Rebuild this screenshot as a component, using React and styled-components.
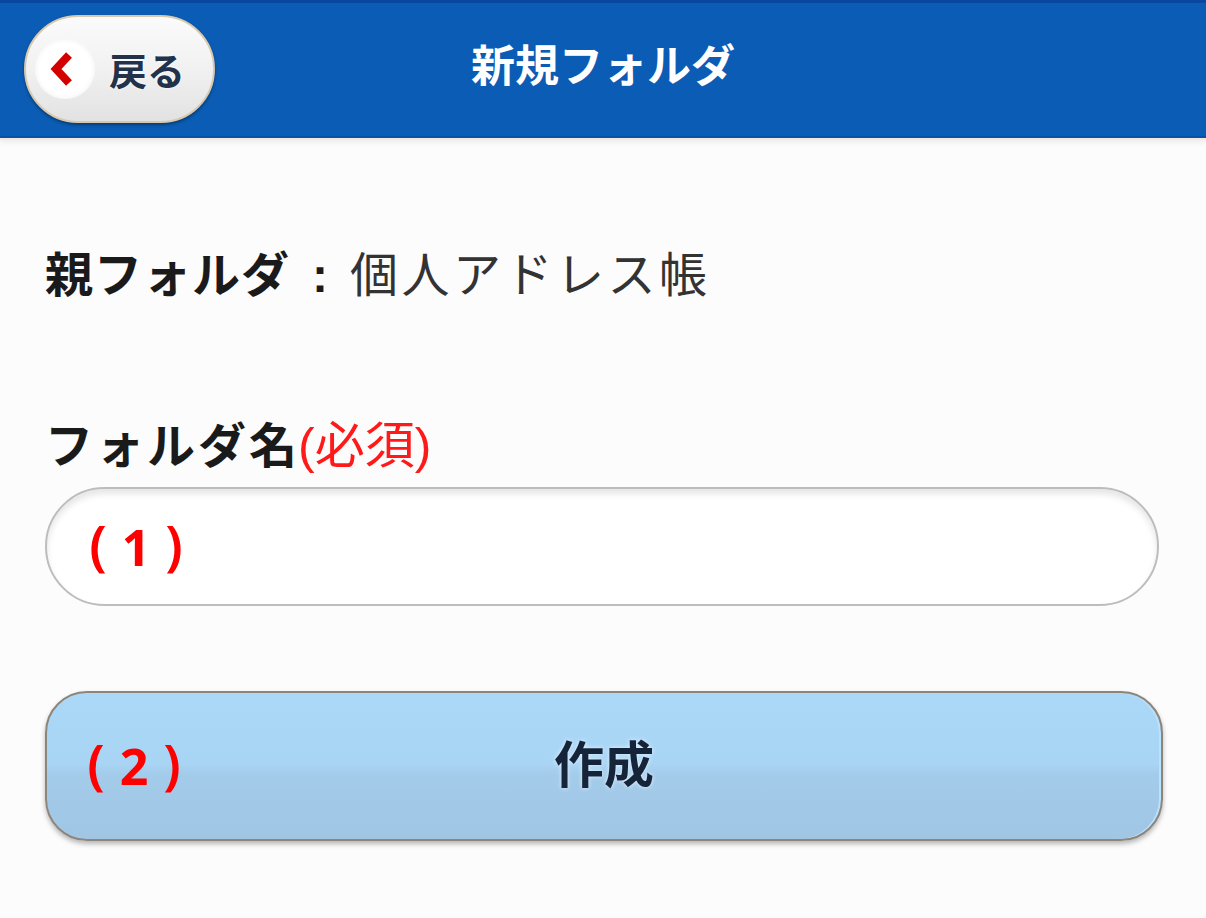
import React from "react";
import styled, { createGlobalStyle } from "styled-components";

const GlobalStyle = createGlobalStyle`
  html, body {
    margin: 0;
    padding: 0;
    background: #fcfcfc;
  }
  body {
    font-family: "Noto Sans CJK JP", "Noto Sans", sans-serif;
  }
`;

function ChevronLeft() {
  return (
    <svg width="28" height="38" viewBox="0 0 28 38">
      <polyline
        points="21,5 8,19 21,33"
        fill="none"
        stroke="#d40000"
        strokeWidth="8"
        strokeLinejoin="miter"
      />
    </svg>
  );
}

function Marker({ n }) {
  return (
    <MarkerWrap>
      <Paren>(</Paren>
      <Digit>{n}</Digit>
      <Paren>)</Paren>
    </MarkerWrap>
  );
}

function App() {
  return (
    <>
      <GlobalStyle />
      <Page>
        <Header>
          <BackButton>
            <IconCircle>
              <ChevronLeft />
            </IconCircle>
            <BackLabel>戻る</BackLabel>
          </BackButton>
          <Title>新規フォルダ</Title>
          <span />
        </Header>

        <Main>
          <InfoRow>
            <Label>親フォルダ</Label>
            <Colon>:</Colon>
            <Value>個人アドレス帳</Value>
          </InfoRow>

          <FieldLabel>
            フォルダ名<Required>(必須)</Required>
          </FieldLabel>
          <Field>
            <Marker n="1" />
          </Field>

          <SubmitButton>
            <Marker n="2" />
            <SubmitText>作成</SubmitText>
            <span />
          </SubmitButton>
        </Main>
      </Page>
    </>
  );
}

export default App;

const Page = styled.div`
  min-height: 918px;
  background: #fcfcfc;
`;

const Header = styled.header`
  height: 138px;
  background: #0b5cb4;
  border-top: 3px solid #0848a0;
  border-bottom: 2px solid #0850a8;
  box-shadow: 0 2px 0 #f2e9dc, 0 5px 5px rgba(0, 0, 0, 0.06);
  display: grid;
  grid-template-columns: 1fr auto 1fr;
  align-items: center;
  padding: 0 24px;
  box-sizing: border-box;
`;

const BackButton = styled.button`
  justify-self: start;
  display: flex;
  align-items: center;
  gap: 14px;
  width: 191px;
  height: 108px;
  margin-top: -2px;
  padding: 0 0 0 9px;
  border-radius: 54px;
  border: 2px solid #d9c9ad;
  background: linear-gradient(#fbfbfb 0%, #f1f1f1 50%, #e2e2e2 100%);
  box-shadow: 0 2px 3px rgba(0, 0, 0, 0.35);
  box-sizing: border-box;
  cursor: pointer;
`;

const IconCircle = styled.span`
  width: 60px;
  height: 60px;
  border-radius: 50%;
  background: radial-gradient(circle, #ffffff 60%, #f2f2f2 80%, #e8e8e8 100%);
  display: flex;
  align-items: center;
  justify-content: center;
  padding-right: 6px;
  box-sizing: border-box;
`;

const BackLabel = styled.span`
  font-family: "Noto Sans CJK JP", sans-serif;
  font-weight: 700;
  font-size: 38px;
  color: #23324b;
  text-shadow: 0 0 3px #ffffff;
`;

const Title = styled.h1`
  margin: 0;
  margin-top: -14px;
  font-size: 44px;
  font-weight: 700;
  color: #ffffff;
`;

const Main = styled.main`
  padding: 102px 45px 0 45px;
  display: flex;
  flex-direction: column;
`;

const InfoRow = styled.div`
  display: flex;
  align-items: baseline;
  font-size: 48px;
  line-height: 62px;
`;

const Label = styled.span`
  font-weight: 700;
  color: #1a1a1a;
  letter-spacing: 1px;
`;

const Colon = styled.span`
  font-family: "Liberation Sans", sans-serif;
  font-weight: 700;
  color: #1a1a1a;
  margin: 0 22px 0 22px;
`;

const Value = styled.span`
  font-weight: 400;
  color: #333333;
  letter-spacing: 3.5px;
`;

const FieldLabel = styled.div`
  margin-top: 104px;
  font-size: 48px;
  line-height: 62px;
  font-weight: 700;
  color: #1a1a1a;
  letter-spacing: 3px;
`;

const Required = styled.span`
  font-family: "Liberation Sans", "Noto Sans CJK JP", sans-serif;
  font-weight: 400;
  color: #ff1a1a;
  letter-spacing: 0;
  font-size: 50px;
  margin-left: -2px;
`;

const Field = styled.div`
  margin-top: 10px;
  height: 119px;
  border-radius: 60px;
  border: 2px solid #bdbdbd;
  background: #ffffff;
  box-shadow: inset 0 5px 6px rgba(0, 0, 0, 0.1);
  display: flex;
  align-items: center;
  padding-left: 32px;
  box-sizing: border-box;
  width: 1114px;
`;

const MarkerWrap = styled.span`
  display: inline-flex;
  align-items: center;
  color: #ff0000;
  font-weight: 700;
  line-height: 1;
  white-space: nowrap;
`;

const Paren = styled.span`
  display: inline-block;
  width: 38px;
  text-align: center;
  font-family: "Noto Sans", sans-serif;
  font-size: 54px;
  font-weight: 600;
  margin-top: -6px;
`;

const Digit = styled.span`
  display: inline-block;
  width: 38px;
  text-align: center;
  font-family: "Noto Sans", sans-serif;
  font-size: 50px;
  font-weight: 700;
`;

const SubmitButton = styled.button`
  margin-top: 85px;
  height: 150px;
  width: 1118px;
  border-radius: 42px;
  border: 2px solid #8e857a;
  background: linear-gradient(
    #acd8f8 0%,
    #a9d5f5 48%,
    #a3cbea 56%,
    #a0c6e4 100%
  );
  box-shadow: 0 3px 5px rgba(0, 0, 0, 0.28), inset -2px 0 0 #b9e2ff;
  display: grid;
  grid-template-columns: 1fr auto 1fr;
  align-items: center;
  padding: 0 30px;
  box-sizing: border-box;
  font-family: "Noto Sans CJK JP", sans-serif;
  cursor: pointer;
  text-align: left;
`;

const SubmitText = styled.span`
  font-size: 50px;
  font-weight: 700;
  color: #16243a;
  text-shadow: 0 0 4px #e6f4ff;
  margin-top: -10px;
`;
